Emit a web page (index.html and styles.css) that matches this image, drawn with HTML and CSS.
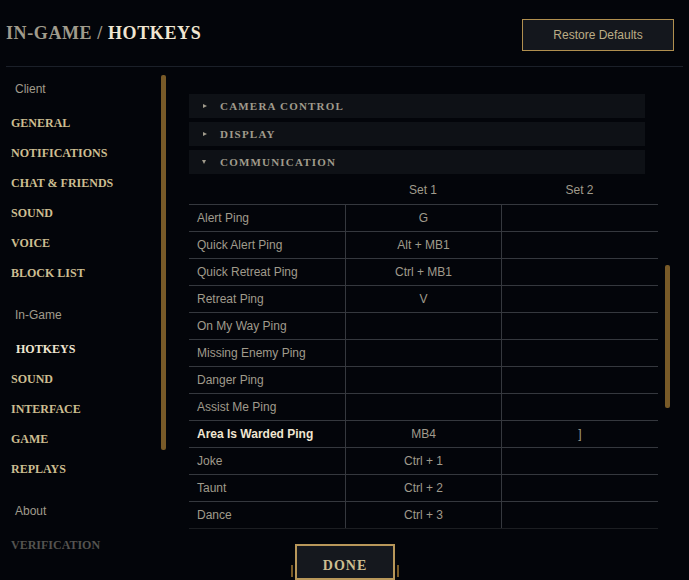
FILE: index.html
```html
<!DOCTYPE html>
<html>
<head>
<meta charset="utf-8">
<link rel="stylesheet" href="styles.css">
</head>
<body>
<header class="top">
  <h1 class="title"><span class="crumb">IN-GAME /</span> <span class="current">HOTKEYS</span></h1>
  <button class="restore">Restore Defaults</button>
</header>
<div class="page">
  <aside class="sidebar">
    <nav class="nav">
      <div class="group">
        <div class="label">Client</div>
        <div class="item">GENERAL</div>
        <div class="item">NOTIFICATIONS</div>
        <div class="item">CHAT &amp; FRIENDS</div>
        <div class="item">SOUND</div>
        <div class="item">VOICE</div>
        <div class="item">BLOCK LIST</div>
      </div>
      <div class="group">
        <div class="label">In-Game</div>
        <div class="item active">HOTKEYS</div>
        <div class="item">SOUND</div>
        <div class="item">INTERFACE</div>
        <div class="item">GAME</div>
        <div class="item">REPLAYS</div>
      </div>
      <div class="group">
        <div class="label">About</div>
        <div class="item dim">VERIFICATION</div>
      </div>
    </nav>
    <div class="track left-track"><div class="thumb"></div></div>
  </aside>
  <section class="right">
    <div class="content">
      <div class="panel">
        <div class="section"><span class="tri closed"></span>CAMERA CONTROL</div>
        <div class="section"><span class="tri closed"></span>DISPLAY</div>
        <div class="section"><span class="tri open"></span>COMMUNICATION</div>
        <div class="sets">
          <div></div><div class="set">Set 1</div><div class="set">Set 2</div>
        </div>
        <div class="grid">
          <div class="row"><div class="name">Alert Ping</div><div class="key">G</div><div class="key"></div></div>
          <div class="row"><div class="name">Quick Alert Ping</div><div class="key">Alt + MB1</div><div class="key"></div></div>
          <div class="row"><div class="name">Quick Retreat Ping</div><div class="key">Ctrl + MB1</div><div class="key"></div></div>
          <div class="row"><div class="name">Retreat Ping</div><div class="key">V</div><div class="key"></div></div>
          <div class="row"><div class="name">On My Way Ping</div><div class="key"></div><div class="key"></div></div>
          <div class="row"><div class="name">Missing Enemy Ping</div><div class="key"></div><div class="key"></div></div>
          <div class="row"><div class="name">Danger Ping</div><div class="key"></div><div class="key"></div></div>
          <div class="row"><div class="name">Assist Me Ping</div><div class="key"></div><div class="key"></div></div>
          <div class="row"><div class="name bold">Area Is Warded Ping</div><div class="key">MB4</div><div class="key">]</div></div>
          <div class="row"><div class="name">Joke</div><div class="key">Ctrl + 1</div><div class="key"></div></div>
          <div class="row"><div class="name">Taunt</div><div class="key">Ctrl + 2</div><div class="key"></div></div>
          <div class="row last"><div class="name">Dance</div><div class="key">Ctrl + 3</div><div class="key"></div></div>
        </div>
      </div>
      <div class="track right-track"><div class="thumb"></div></div>
    </div>
    <footer class="footer">
      <button class="done">DONE</button>
    </footer>
  </section>
</div>
</body>
</html>
```
FILE: styles.css
```css
* { box-sizing: border-box; }
html, body {
  margin: 0;
  padding: 0;
  background: #03050a;
  width: 689px;
  height: 580px;
  overflow: hidden;
  font-family: "Liberation Sans", Arial, sans-serif;
}
.top {
  height: 67px;
  margin: 0 6px;
  border-bottom: 1px solid #1b2029;
  display: flex;
  align-items: center;
  justify-content: space-between;
  padding-top: 1px;
}
.title {
  margin: 0;
  font-family: "Liberation Serif", "Times New Roman", serif;
  font-weight: bold;
  font-size: 18px;
  letter-spacing: 0.6px;
}
.crumb { color: #a09b8c; }
.current { color: #f0e6d2; }
.restore {
  margin-right: 9px;
  margin-top: 2px;
  width: 152px;
  height: 32px;
  background: #14171d;
  border: 1px solid #b08f4f;
  color: #bcad85;
  font-family: "Liberation Sans", Arial, sans-serif;
  font-size: 12px;
  padding: 0;
}
.page {
  display: flex;
  height: 513px;
}
.sidebar {
  width: 170px;
  display: flex;
  padding-top: 7px;
}
.nav { width: 161px; }
.group { margin-bottom: 12px; }
.label {
  height: 30px;
  line-height: 30px;
  margin-bottom: 4px;
  padding-left: 15px;
  color: #a09b8c;
  font-size: 12px;
}
.item {
  height: 30px;
  line-height: 30px;
  padding-left: 11px;
  color: #cdbe91;
  font-family: "Liberation Serif", "Times New Roman", serif;
  font-weight: bold;
  font-size: 12px;
  letter-spacing: 0;
}
.item.active { color: #f0e6d2; padding-left: 16px; }
.item.dim { color: #54534f; }
.track { width: 5px; }
.thumb {
  width: 5px;
  background: #785a28;
  border-radius: 2px;
}
.left-track .thumb { margin-top: 1px; height: 375px; }
.right { flex: 1; display: flex; flex-direction: column; }
.content {
  height: 478px;
  display: flex;
  padding-top: 27px;
  padding-left: 19px;
  overflow: hidden;
}
.panel { width: 469px; }
.right-track { margin-left: 7px; }
.right-track .thumb { margin-top: 171px; height: 143px; }
.section {
  width: 456px;
  height: 24px;
  margin-bottom: 4px;
  background: #0e1116;
  display: flex;
  align-items: center;
  padding-left: 14px;
  color: #a09b8c;
  font-family: "Liberation Serif", "Times New Roman", serif;
  font-weight: bold;
  font-size: 11px;
  letter-spacing: 1.2px;
}
.tri {
  width: 0;
  height: 0;
  margin-right: 13px;
}
.tri.closed {
  border-top: 2px solid transparent;
  border-bottom: 2px solid transparent;
  border-left: 4px solid #a09b8c;
}
.tri.open {
  border-left: 2px solid transparent;
  border-right: 2px solid transparent;
  border-top: 4px solid #a09b8c;
  margin-left: -1px;
  margin-right: 14px;
}
.sets {
  display: grid;
  grid-template-columns: 156px 156px 157px;
  height: 31px;
  margin-top: -4px;
  align-items: center;
  border-bottom: 1px solid #35383e;
  padding-top: 2px;
}
.set { text-align: center; color: #a09b8c; font-size: 12px; }
.row {
  display: grid;
  grid-template-columns: 156px 156px 157px;
  height: 27px;
  border-bottom: 1px solid #35383e;
}
.row.last { border-bottom-color: #1c1e22; }
.row > div {
  display: flex;
  align-items: center;
  font-size: 12px;
  color: #a09b8c;
}
.name { padding-left: 8px; }
.key {
  justify-content: center;
  border-left: 1px solid #35383e;
}
.name.bold { color: #f0e6d2; font-weight: bold; }
.footer { padding-top: 6px; }
.done {
  position: relative;
  margin-left: 125px;
  width: 100px;
  height: 36px;
  background: #15181e;
  border: 2px solid #b8975a;
  color: #cdbe91;
  font-family: "Liberation Serif", "Times New Roman", serif;
  font-weight: bold;
  font-size: 14px;
  letter-spacing: 1px;
  padding: 8px 0 0;
}
.done::before, .done::after {
  content: "";
  position: absolute;
  top: 19px;
  width: 2px;
  height: 12px;
  background: #785a28;
}
.done::before { left: -6px; }
.done::after { right: -6px; }
```
